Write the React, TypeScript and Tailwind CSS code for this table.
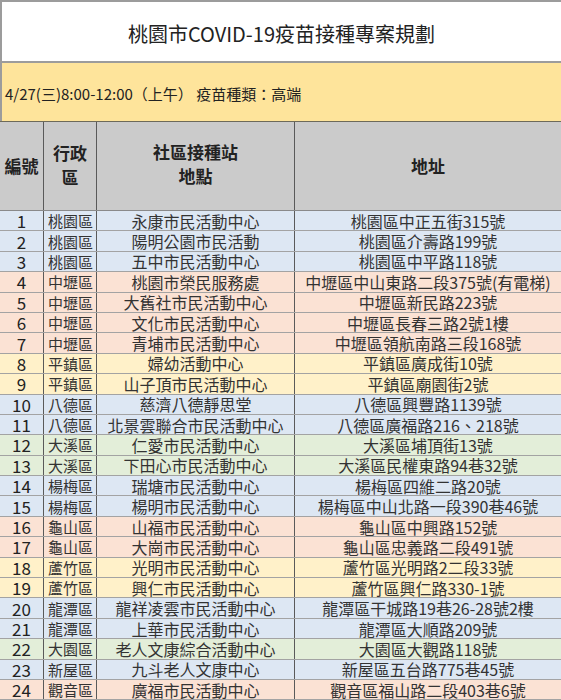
const rows: [number, string, string, string, string][] = [
  [1, "桃園區", "永康市民活動中心", "桃園區中正五街315號", "blue"],
  [2, "桃園區", "陽明公園市民活動", "桃園區介壽路199號", "blue"],
  [3, "桃園區", "五中市民活動中心", "桃園區中平路118號", "blue"],
  [4, "中壢區", "桃園市榮民服務處", "中壢區中山東路二段375號(有電梯)", "peach"],
  [5, "中壢區", "大舊社市民活動中心", "中壢區新民路223號", "peach"],
  [6, "中壢區", "文化市民活動中心", "中壢區長春三路2號1樓", "peach"],
  [7, "中壢區", "青埔市民活動中心", "中壢區領航南路三段168號", "peach"],
  [8, "平鎮區", "婦幼活動中心", "平鎮區廣成街10號", "yellow"],
  [9, "平鎮區", "山子頂市民活動中心", "平鎮區廟園街2號", "yellow"],
  [10, "八德區", "慈濟八德靜思堂", "八德區興豐路1139號", "blue"],
  [11, "八德區", "北景雲聯合市民活動中心", "八德區廣福路216、218號", "blue"],
  [12, "大溪區", "仁愛市民活動中心", "大溪區埔頂街13號", "green"],
  [13, "大溪區", "下田心市民活動中心", "大溪區民權東路94巷32號", "green"],
  [14, "楊梅區", "瑞塘市民活動中心", "楊梅區四維二路20號", "blue"],
  [15, "楊梅區", "楊明市民活動中心", "楊梅區中山北路一段390巷46號", "blue"],
  [16, "龜山區", "山福市民活動中心", "龜山區中興路152號", "peach"],
  [17, "龜山區", "大崗市民活動中心", "龜山區忠義路二段491號", "peach"],
  [18, "蘆竹區", "光明市民活動中心", "蘆竹區光明路2二段33號", "yellow"],
  [19, "蘆竹區", "興仁市民活動中心", "蘆竹區興仁路330-1號", "yellow"],
  [20, "龍潭區", "龍祥凌雲市民活動中心", "龍潭區干城路19巷26-28號2樓", "blue"],
  [21, "龍潭區", "上華市民活動中心", "龍潭區大順路209號", "blue"],
  [22, "大園區", "老人文康綜合活動中心", "大園區大觀路118號", "green"],
  [23, "新屋區", "九斗老人文康中心", "新屋區五台路775巷45號", "blue"],
  [24, "觀音區", "廣福市民活動中心", "觀音區福山路二段403巷6號", "peach"],
]

const fills: Record<string, string> = {
  blue: "bg-[#dde7f3]",
  peach: "bg-[#fbe2d4]",
  yellow: "bg-[#fff1c9]",
  green: "bg-[#e3eed9]",
}

const font = { fontFamily: '"Noto Sans CJK TC", "Noto Sans", sans-serif' }

export default function App() {
  return (
    <div className="w-[561px] h-[700px] overflow-hidden bg-white text-[#222]" style={font}>
      <div className="h-[61px] border-t-2 border-l-2 border-[#9c9c9c] flex items-center justify-center">
        <h1 className="text-[20px] leading-none pt-[4px]">桃園市COVID-19疫苗接種專案規劃</h1>
      </div>
      <div className="h-[60px] border-t-2 border-l-2 border-[#9c9c9c] bg-[#fee49b] flex items-center pl-[3px]">
        <span className="text-[15px] leading-none pt-[2px]">4/27(三)8:00-12:00（上午） 疫苗種類：高端</span>
      </div>
      <div className="grid grid-cols-[44px_53px_198px_1fr] h-[89px] border-t border-[#6d6a5a] bg-[#cbcbcb] text-[17px] font-bold leading-[24px] text-[#222]">
        <div className="flex items-center justify-center border-r border-[#5a5a5a]">編號</div>
        <div className="flex flex-col items-center justify-center border-r border-[#5a5a5a] pb-[2px]">
          <span>行政</span>
          <span>區</span>
        </div>
        <div className="flex flex-col items-center justify-center border-r border-[#5a5a5a] pb-[4px]">
          <span>社區接種站</span>
          <span>地點</span>
        </div>
        <div className="flex items-center justify-center">地址</div>
      </div>
      <div className="border-t border-[#8a8a8a]">
        {rows.map(([n, district, place, addr, c]) => (
          <div
            key={n}
            className={`grid grid-cols-[44px_53px_198px_1fr] h-[20.4px] border-b border-[#a3a3a3] ${fills[c]} leading-none`}
          >
            <div className="flex items-center justify-center border-r border-[#5a5a5a] text-[17px]">{n}</div>
            <div className="flex items-center pl-[4px] border-r border-[#5a5a5a] text-[15px] text-[#333]">{district}</div>
            <div className="flex items-center justify-center border-r border-[#5a5a5a] text-[16px] text-[#333]">{place}</div>
            <div className="flex items-center justify-center text-[16px] text-[#333]">{addr}</div>
          </div>
        ))}
      </div>
    </div>
  )
}
